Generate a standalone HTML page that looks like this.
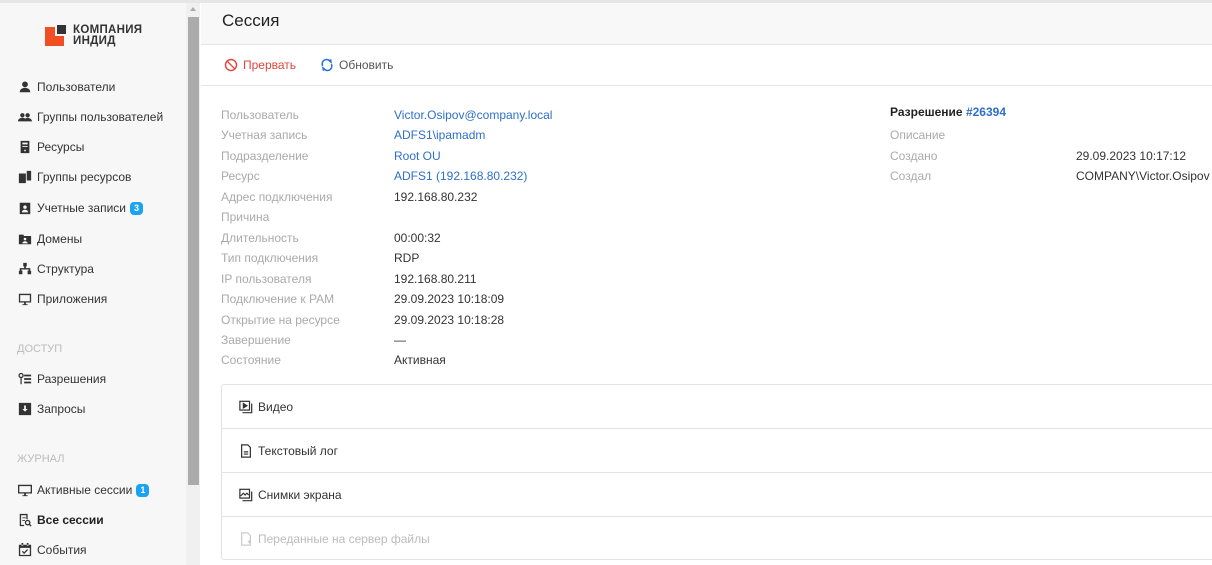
<!DOCTYPE html>
<html><head><meta charset="utf-8"><style>
*{box-sizing:border-box;margin:0;padding:0}
body{width:1212px;height:565px;overflow:hidden;background:#fff;font-family:"Liberation Sans","Noto Sans CJK SC",sans-serif;font-size:12px;color:#333;position:relative}
.top{position:absolute;left:0;top:0;width:1212px;height:3px;background:#e6e6e6}
.side{position:absolute;left:0;top:3px;width:186px;height:562px;background:#f7f7f8}
.sb{position:absolute;left:186px;top:3px;width:14px;height:562px;background:#f0f0f0}
.thumb{position:absolute;left:188px;top:17px;width:11px;height:468px;background:#ababab}
.arrow{position:absolute;left:190px;top:7px;width:0;height:0;border-left:3px solid transparent;border-right:3px solid transparent;border-bottom:4px solid #aaa}
.logo{position:absolute;left:45px;top:25px}
.logo .a{position:absolute;left:0;top:2px;width:19px;height:19px;background:#f04e23}
.logo .b{position:absolute;left:10px;top:-2px;width:9px;height:9px;background:#333;border:2px solid #f7f7f8;box-sizing:content-box}
.logo .t{position:absolute;left:28px;top:0;font-size:11.5px;font-weight:bold;line-height:10.5px;color:#333;white-space:nowrap;letter-spacing:.3px}
.it{position:absolute;left:18px;display:flex;align-items:center;white-space:nowrap;color:#333;font-size:12px}
.it svg{width:14px;height:14px;margin-right:5px;fill:#333}
.badge{display:inline-block;background:#1aa3f0;color:#fff;font-size:9px;font-weight:bold;border-radius:4px;padding:1px 4px;margin-left:4px;line-height:11px}
.sec{position:absolute;left:17px;color:#bbb;font-size:11px}
.main{position:absolute;left:201px;top:3px;right:0;bottom:0}
.hdr{height:42px;background:#f8f8f8;border-bottom:1px solid #e3e3e3;padding:8px 0 0 21px;font-size:17px;color:#222}
.tb{height:41px;border-bottom:1px solid #e6e6e6;position:relative}
.btn{position:absolute;top:13px;display:flex;align-items:center;font-size:12px}
.btn svg{width:14px;height:14px;margin-right:5px}
.row{position:absolute;font-size:12px;white-space:nowrap}
.l{color:#aaa}.v{color:#333}.lk{color:#2f6fc9}
.acc{position:absolute;left:221px;top:384px;width:995px;height:176px;border:1px solid #e3e3e3;border-radius:3px}
.ar{height:44px;border-bottom:1px solid #e3e3e3;display:flex;align-items:center;padding-left:17px;font-size:12px;color:#333}
.ar:last-child{border-bottom:none;color:#bbb}
.ar svg{width:14px;height:14px;margin-right:5px}
</style></head><body>
<div class="top"></div>
<div class="side"></div>
<div class="sb"></div><div class="thumb"></div><div class="arrow"></div>
<div class="logo"><div class="a"></div><div class="b"></div><div class="t">КОМПАНИЯ<br>ИНДИД</div></div>

<div class="it" style="top:80px"><svg viewBox="0 0 16 16"><circle cx="8" cy="5" r="3.3"/><path d="M2 14c0-3.5 3-5 6-5s6 1.5 6 5z"/></svg>Пользователи</div>
<div class="it" style="top:110px"><svg viewBox="0 0 16 16"><circle cx="5" cy="6" r="2.5"/><circle cx="11" cy="6" r="2.5"/><path d="M0 13c0-2.5 2-4 5-4s5 1.5 5 4zM7 13c0-2.5 2-4 4-4s5 1.5 5 4z"/></svg>Группы пользователей</div>
<div class="it" style="top:140px"><svg viewBox="0 0 16 16"><path d="M3 1h10v14H3zM5 3v2h6V3zm0 4v1h6V7zm3 4a1 1 0 100 2 1 1 0 000-2z" fill-rule="evenodd"/></svg>Ресурсы</div>
<div class="it" style="top:170px"><svg viewBox="0 0 16 16"><path d="M1 4h8v11H1zM10 1h5v11h-5z"/></svg>Группы ресурсов</div>
<div class="it" style="top:201px"><svg viewBox="0 0 16 16"><path d="M2 2h12v13H2zM8 5a2 2 0 100 4 2 2 0 000-4zM4.5 13c0-2 1.5-3 3.5-3s3.5 1 3.5 3z" fill-rule="evenodd"/></svg>Учетные записи<span class="badge">3</span></div>
<div class="it" style="top:232px"><svg viewBox="0 0 16 16"><path d="M1 3h5l1 1.5h8V14H1zM8 6.5a1.5 1.5 0 100 3 1.5 1.5 0 000-3zM5 13c0-1.5 1.3-2.5 3-2.5s3 1 3 2.5z" fill-rule="evenodd"/></svg>Домены</div>
<div class="it" style="top:262px"><svg viewBox="0 0 16 16"><path d="M6 1h4v4H9v2h5v3h1v4h-4v-4h1V8.5H4V10h1v4H1v-4h1V7h5V5H6z"/></svg>Структура</div>
<div class="it" style="top:292px"><svg viewBox="0 0 16 16"><path d="M1 2h14v10H9v2h2v1H5v-1h2v-2H1zM2.5 3.5v7h11v-7z" fill-rule="evenodd"/></svg>Приложения</div>
<div class="sec" style="top:343px">ДОСТУП</div>
<div class="it" style="top:372px"><svg viewBox="0 0 16 16"><circle cx="3.5" cy="4" r="2.3" fill="none" stroke="#333" stroke-width="1.5"/><path d="M2.8 6h1.4v8H2.8zM7 3h8v2H7zm0 4h8v2H7zm0 4h8v2H7z"/></svg>Разрешения</div>
<div class="it" style="top:402px"><svg viewBox="0 0 16 16"><path d="M1 1h14v14H1zM7 4v4H5l3 3 3-3H9V4z" fill-rule="evenodd"/></svg>Запросы</div>
<div class="sec" style="top:453px">ЖУРНАЛ</div>
<div class="it" style="top:483px"><svg viewBox="0 0 16 16"><path d="M0 2h16v10H9v2h2v1H5v-1h2v-2H0zM1.5 3.5v7h13v-7z" fill-rule="evenodd"/></svg>Активные сессии<span class="badge">1</span></div>
<div class="it" style="top:513px;font-weight:bold;color:#222"><svg viewBox="0 0 16 16"><path d="M2 1h9v6H9.5V2.5h-6v11H7V15H2zM5 5h4v1H5zm0 3h3v1H5z"/><circle cx="11" cy="11" r="2.5" fill="none" stroke="#333" stroke-width="1.5"/><path d="M12.5 12.5l2.5 2.5" stroke="#333" stroke-width="1.5"/></svg>Все сессии</div>
<div class="it" style="top:543px"><svg viewBox="0 0 16 16"><path d="M1 2h14v13H1zM2.5 5.5v8h11v-8zM4 0h2v3H4zm6 0h2v3h-2z" fill-rule="evenodd"/><path d="M5 9.5l2 2 4-4" stroke="#333" stroke-width="1.5" fill="none"/></svg>События</div>

<div class="main">
<div class="hdr">Сессия</div>
<div class="tb">
<div class="btn" style="left:23px;color:#e0453d"><svg viewBox="0 0 16 16"><circle cx="8" cy="8" r="6.3" fill="none" stroke="#e0453d" stroke-width="1.6"/><path d="M3.5 3.5l9 9" stroke="#e0453d" stroke-width="1.6"/></svg>Прервать</div>
<div class="btn" style="left:119px;color:#555"><svg viewBox="0 0 16 16" fill="none" stroke="#2a72d6" stroke-width="1.8"><path d="M3 9A5 5 0 0 1 12 4.5"/><path d="M13 7A5 5 0 0 1 4 11.5"/><path d="M10 2.5l2.5 2 -0.5 -3" /><path d="M6 13.5l-2.5-2 .5 3"/></svg>Обновить</div>
</div>
</div>

<div class="row l" style="left:221px;top:108px">Пользователь</div><div class="row lk" style="left:394px;top:108px">Victor.Osipov@company.local</div>
<div class="row l" style="left:221px;top:128px">Учетная запись</div><div class="row lk" style="left:394px;top:128px">ADFS1\ipamadm</div>
<div class="row l" style="left:221px;top:149px">Подразделение</div><div class="row lk" style="left:394px;top:149px">Root OU</div>
<div class="row l" style="left:221px;top:169px">Ресурс</div><div class="row lk" style="left:394px;top:169px">ADFS1 (192.168.80.232)</div>
<div class="row l" style="left:221px;top:190px">Адрес подключения</div><div class="row v" style="left:394px;top:190px">192.168.80.232</div>
<div class="row l" style="left:221px;top:210px">Причина</div>
<div class="row l" style="left:221px;top:231px">Длительность</div><div class="row v" style="left:394px;top:231px">00:00:32</div>
<div class="row l" style="left:221px;top:251px">Тип подключения</div><div class="row v" style="left:394px;top:251px">RDP</div>
<div class="row l" style="left:221px;top:272px">IP пользователя</div><div class="row v" style="left:394px;top:272px">192.168.80.211</div>
<div class="row l" style="left:221px;top:292px">Подключение к PAM</div><div class="row v" style="left:394px;top:292px">29.09.2023 10:18:09</div>
<div class="row l" style="left:221px;top:313px">Открытие на ресурсе</div><div class="row v" style="left:394px;top:313px">29.09.2023 10:18:28</div>
<div class="row l" style="left:221px;top:333px">Завершение</div><div class="row v" style="left:394px;top:333px">—</div>
<div class="row l" style="left:221px;top:353px">Состояние</div><div class="row v" style="left:394px;top:353px">Активная</div>

<div class="row v" style="left:890px;top:105px;color:#222;font-weight:bold">Разрешение <span class="lk">#26394</span></div>
<div class="row l" style="left:890px;top:128px">Описание</div>
<div class="row l" style="left:890px;top:149px">Создано</div><div class="row v" style="left:1076px;top:149px">29.09.2023 10:17:12</div>
<div class="row l" style="left:890px;top:169px">Создал</div><div class="row v" style="left:1076px;top:169px">COMPANY\Victor.Osipov</div>

<div class="acc">
<div class="ar"><svg viewBox="0 0 16 16" fill="none" stroke="#333" stroke-width="1.4"><rect x="1" y="1.5" width="11" height="10"/><path d="M14.5 4v10.5H4"/><path d="M5 4l4 2.5L5 9z" fill="#333"/></svg>Видео</div>
<div class="ar"><svg viewBox="0 0 16 16" fill="none" stroke="#333" stroke-width="1.4"><path d="M3 1h7l3 3v11H3z"/><path d="M5.5 9h5M5.5 11.5h5"/></svg>Текстовый лог</div>
<div class="ar"><svg viewBox="0 0 16 16" fill="none" stroke="#333" stroke-width="1.4"><rect x="1" y="1.5" width="11" height="10"/><path d="M14.5 4v10.5H4"/><path d="M2 9l3-3 2 2 2-2 2 2"/></svg>Снимки экрана</div>
<div class="ar"><svg viewBox="0 0 16 16" fill="none" stroke="#ccc" stroke-width="1.4"><path d="M3 1h7l3 3v11H3z"/><path d="M10 11h4M12 9v4"/></svg>Переданные на сервер файлы</div>
</div>
</body></html>
